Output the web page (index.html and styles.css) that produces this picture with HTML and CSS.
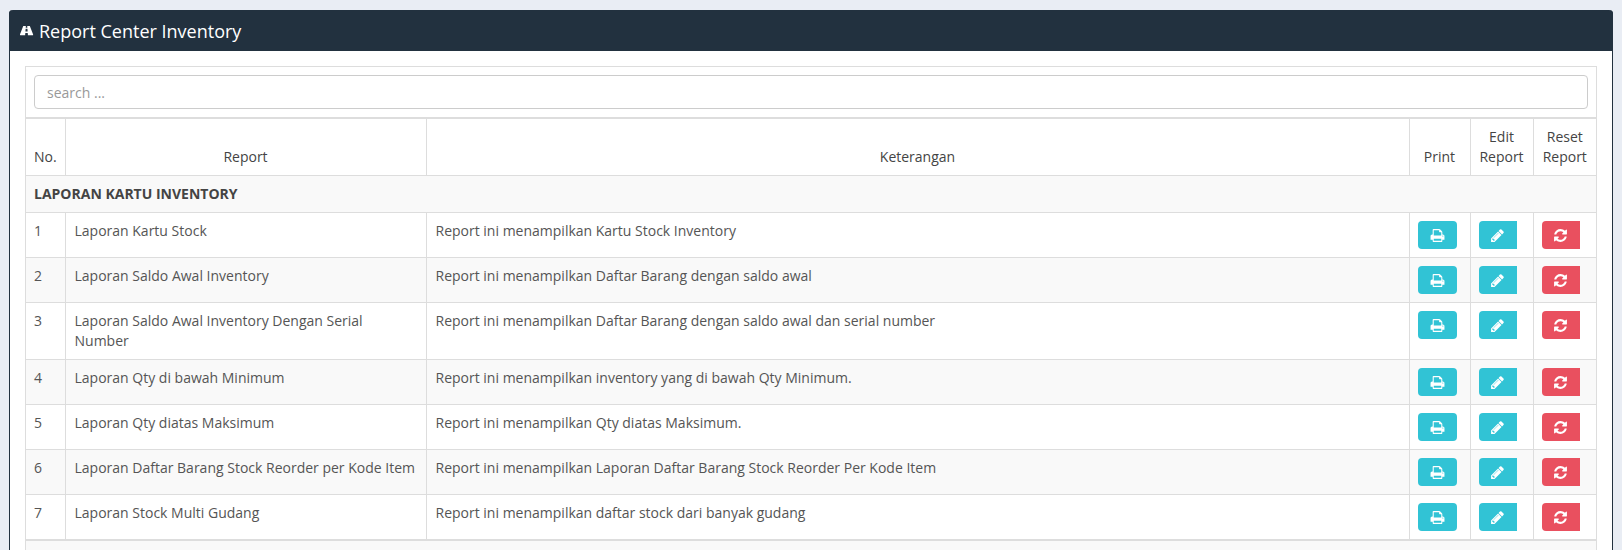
FILE: index.html
```html
<!DOCTYPE html>
<html lang="en">
<head>
  <meta charset="UTF-8" />
  <title>Report Center Inventory</title>
  <link rel="stylesheet" href="styles.css">
</head>
<body>

  <svg width="0" height="0" class="defs">
    <symbol id="i-road" viewBox="0 0 1920 1792">
      <path d="M1047 1012v-4l-24-320q-1-13-11-22.500t-23-9.500h-186q-13 0-23 9.500t-11 22.500l-24 320v4q-1 12 8 20t21 8h244q12 0 21-8t8-20zm759 467q0 73-46 73h-704q13 0 22-9.500t8-22.500l-20-256q-1-13-11-22.500t-23-9.500h-272q-13 0-23 9.500t-11 22.500l-20 256q-1 13 8 22.500t22 9.500h-704q-46 0-46-73 0-54 26-116l417-1044q8-19 26-33t38-14h339q-13 0-23 9.500t-11 22.500l-15 192q-1 14 8 23t22 9h166q13 0 22-9t8-23l-15-192q-1-13-11-22.500t-23-9.500h339q20 0 38 14t26 33l417 1044q26 62 26 116z"/>
    </symbol>
    <symbol id="i-print" viewBox="0 0 1792 1792">
      <path d="M448 1536h896v-256h-896v256zm0-640h896v-384h-160q-40 0-68-28t-28-68v-160h-640v640zm1152 64q0-26-19-45t-45-19-45 19-19 45 19 45 45 19 45-19 19-45zm128 0v416q0 13-9.500 22.500t-22.500 9.500h-224v160q0 40-28 68t-68 28h-960q-40 0-68-28t-28-68v-160h-224q-13 0-22.500-9.500t-9.500-22.500v-416q0-79 56.500-135.500t135.500-56.500h64v-544q0-40 28-68t68-28h672q40 0 88 20t76 48l152 152q28 28 48 76t20 88v256h64q79 0 135.500 56.500t56.500 135.500z"/>
    </symbol>
    <symbol id="i-edit" viewBox="0 0 1792 1792">
      <path d="M491 1536l91-91-235-235-91 91v107h128v128h107zm523-928q0-22-22-22-10 0-17 7l-542 542q-7 7-7 17 0 22 22 22 10 0 17-7l542-542q7-7 7-17zm-54-192l416 416-832 832h-416v-416zm683 96q0 53-37 90l-166 166-416-416 166-165q36-38 90-38 53 0 91 38l235 234q37 39 37 91z"/>
    </symbol>
    <symbol id="i-refresh" viewBox="0 0 1792 1792">
      <path d="M1639 1056q0 5-1 7-64 268-268 434.500t-478 166.500q-146 0-282.500-55t-243.500-157l-129 129q-19 19-45 19t-45-19-19-45v-448q0-26 19-45t45-19h448q26 0 45 19t19 45-19 45l-137 137q71 66 161 102t187 36q134 0 250-65t186-179q11-17 53-117 8-23 30-23h192q13 0 22.500 9.500t9.500 22.500zm25-800v448q0 26-19 45t-45 19h-448q-26 0-45-19t-19-45 19-45l138-138q-148-137-349-137-134 0-250 65t-186 179q-11 17-53 117-8 23-30 23h-199q-13 0-22.500-9.500t-9.500-22.500v-7q65-268 270-434.500t480-166.500q146 0 284 55.500t245 156.500l130-129q19-19 45-19t45 19 19 45z"/>
    </symbol>
  </svg>

  <div class="panel">
    <div class="panel-heading">
      <svg class="road-icon"><use href="#i-road"/></svg>
      <span>Report Center Inventory</span>
    </div>
    <div class="panel-body">
      <div class="report-box">
        <div class="search-row">
          <input type="text" class="search" placeholder="search ...">
        </div>
        <table class="report-table">
          <colgroup>
            <col class="c-no"><col class="c-report"><col class="c-ket"><col class="c-print"><col class="c-edit"><col class="c-reset">
          </colgroup>
          <thead>
            <tr>
              <th>No.</th>
              <th>Report</th>
              <th>Keterangan</th>
              <th>Print</th>
              <th>Edit Report</th>
              <th>Reset Report</th>
            </tr>
          </thead>
          <tbody>
            <tr class="group">
              <td colspan="6">LAPORAN KARTU INVENTORY</td>
            </tr>
            <tr>
              <td>1</td>
              <td class="name">Laporan Kartu Stock</td>
              <td class="name">Report ini menampilkan Kartu Stock Inventory</td>
              <td><button class="btn info"><svg><use href="#i-print"/></svg></button></td>
              <td><button class="btn info square"><svg><use href="#i-edit"/></svg></button></td>
              <td><button class="btn danger square"><svg><use href="#i-refresh"/></svg></button></td>
            </tr>
            <tr class="odd">
              <td>2</td>
              <td class="name">Laporan Saldo Awal Inventory</td>
              <td class="name">Report ini menampilkan Daftar Barang dengan saldo awal</td>
              <td><button class="btn info"><svg><use href="#i-print"/></svg></button></td>
              <td><button class="btn info square"><svg><use href="#i-edit"/></svg></button></td>
              <td><button class="btn danger square"><svg><use href="#i-refresh"/></svg></button></td>
            </tr>
            <tr>
              <td>3</td>
              <td class="name">Laporan Saldo Awal Inventory Dengan Serial Number</td>
              <td class="name">Report ini menampilkan Daftar Barang dengan saldo awal dan serial number</td>
              <td><button class="btn info"><svg><use href="#i-print"/></svg></button></td>
              <td><button class="btn info square"><svg><use href="#i-edit"/></svg></button></td>
              <td><button class="btn danger square"><svg><use href="#i-refresh"/></svg></button></td>
            </tr>
            <tr class="odd">
              <td>4</td>
              <td class="name">Laporan Qty di bawah Minimum</td>
              <td class="name">Report ini menampilkan inventory yang di bawah Qty Minimum.</td>
              <td><button class="btn info"><svg><use href="#i-print"/></svg></button></td>
              <td><button class="btn info square"><svg><use href="#i-edit"/></svg></button></td>
              <td><button class="btn danger square"><svg><use href="#i-refresh"/></svg></button></td>
            </tr>
            <tr>
              <td>5</td>
              <td class="name">Laporan Qty diatas Maksimum</td>
              <td class="name">Report ini menampilkan Qty diatas Maksimum.</td>
              <td><button class="btn info"><svg><use href="#i-print"/></svg></button></td>
              <td><button class="btn info square"><svg><use href="#i-edit"/></svg></button></td>
              <td><button class="btn danger square"><svg><use href="#i-refresh"/></svg></button></td>
            </tr>
            <tr class="odd">
              <td>6</td>
              <td class="name">Laporan Daftar Barang Stock Reorder per Kode Item</td>
              <td class="name">Report ini menampilkan Laporan Daftar Barang Stock Reorder Per Kode Item</td>
              <td><button class="btn info"><svg><use href="#i-print"/></svg></button></td>
              <td><button class="btn info square"><svg><use href="#i-edit"/></svg></button></td>
              <td><button class="btn danger square"><svg><use href="#i-refresh"/></svg></button></td>
            </tr>
            <tr>
              <td>7</td>
              <td class="name">Laporan Stock Multi Gudang</td>
              <td class="name">Report ini menampilkan daftar stock dari banyak gudang</td>
              <td><button class="btn info"><svg><use href="#i-print"/></svg></button></td>
              <td><button class="btn info square"><svg><use href="#i-edit"/></svg></button></td>
              <td><button class="btn danger square"><svg><use href="#i-refresh"/></svg></button></td>
            </tr>
          </tbody>
        </table>
        <div class="box-footer"></div>
      </div>
    </div>
  </div>

</body>
</html>
```

FILE: styles.css
```css
html, body {
  height: 550px;
  overflow: hidden;
}

body {
  font-family: 'Open Sans', sans-serif;
  font-size: 14px;
  line-height: 20px;
  color: #555;
  background: #e9edf4;
  margin: 0;
  padding: 10px 9px 0 9px;
  box-sizing: border-box;
}

.defs {
  display: block;
}

.panel {
  background: #fff;
  border-left: 1px solid #22313f;
  border-right: 1px solid #22313f;
  border-radius: 4px 4px 0 0;
  height: 560px;
}

.panel-heading {
  background: #22313f;
  color: #fff;
  height: 41px;
  margin: 0 -1px;
  border-radius: 4px 4px 0 0;
  padding: 0 10px 0 11px;
  display: flex;
  align-items: center;
  gap: 5px;
  font-size: 18px;
}

.road-icon {
  width: 14px;
  height: 13px;
  fill: #fff;
}

.panel-body {
  padding: 15px 15px 0 15px;
}

.report-box {
  border: 1px solid #ddd;
  border-bottom: 0;
}

.search-row {
  padding: 8px;
}

.search {
  display: block;
  width: 100%;
  height: 34px;
  box-sizing: border-box;
  padding: 6px 12px;
  font-family: inherit;
  font-size: 14px;
  color: #555;
  border: 1px solid #ccc;
  border-radius: 4px;
  outline: 0;
}

.search::placeholder {
  color: #999;
  opacity: 1;
}

.report-table {
  width: 100%;
  border-collapse: collapse;
  table-layout: fixed;
}

.c-no { width: 39px; }
.c-report { width: 361px; }
.c-ket { width: 983px; }
.c-print { width: 61px; }
.c-edit { width: 63px; }
.c-reset { width: 63px; }

.report-table th, .report-table td {
  border: 1px solid #ddd;
  padding: 8px;
  vertical-align: top;
}

.report-table tr > :first-child {
  border-left: 0;
}

.report-table tr > :last-child {
  border-right: 0;
}

.report-table th {
  font-weight: 500;
  color: #444;
  text-align: center;
  vertical-align: bottom;
  border-top: 2px solid #ddd;
}

.report-table td.name {
  padding-left: 9px;
}

.report-table .group td {
  background: #f9f9f9;
  font-weight: 700;
  color: #444;
}

.report-table tbody tr:last-child td {
  border-bottom: 2px solid #ddd;
}

.report-table .odd td {
  background: #f9f9f9;
}

.btn {
  display: flex;
  align-items: center;
  justify-content: center;
  width: 39px;
  height: 28px;
  padding: 0;
  border: 0;
  border-radius: 4px;
  color: #fff;
}

.btn svg {
  width: 15px;
  height: 15px;
  fill: #fff;
}

.btn.square {
  width: 38px;
  border-radius: 4px 0 0 4px;
}

.info {
  background: #31c3d5;
}

.danger {
  background: #e9505f;
}

.box-footer {
  background: #f9f9f9;
  height: 20px;
}
```
